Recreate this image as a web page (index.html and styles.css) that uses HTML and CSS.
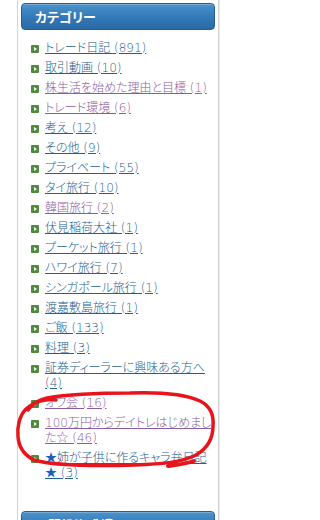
FILE: index.html
```html
<!DOCTYPE html>
<html lang="ja">
<head>
<meta charset="utf-8">
<link rel="stylesheet" href="styles.css">
</head>
<body>
<div class="column">
  <section class="panel">
    <h2 class="panel-title">カテゴリー</h2>
    <ul class="cats">
      <li><span class="bullet"></span><a href="#">トレード日記 (891)</a></li>
      <li><span class="bullet"></span><a href="#">取引動画 (10)</a></li>
      <li><span class="bullet"></span><a href="#" class="visited">株生活を始めた理由と目標 (1)</a></li>
      <li><span class="bullet"></span><a href="#" class="visited">トレード環境 (6)</a></li>
      <li><span class="bullet"></span><a href="#">考え (12)</a></li>
      <li><span class="bullet"></span><a href="#">その他 (9)</a></li>
      <li><span class="bullet"></span><a href="#">プライベート (55)</a></li>
      <li><span class="bullet"></span><a href="#">タイ旅行 (10)</a></li>
      <li><span class="bullet"></span><a href="#" class="visited">韓国旅行 (2)</a></li>
      <li><span class="bullet"></span><a href="#">伏見稲荷大社 (1)</a></li>
      <li><span class="bullet"></span><a href="#">プーケット旅行 (1)</a></li>
      <li><span class="bullet"></span><a href="#">ハワイ旅行 (7)</a></li>
      <li><span class="bullet"></span><a href="#">シンガポール旅行 (1)</a></li>
      <li><span class="bullet"></span><a href="#">渡嘉敷島旅行 (1)</a></li>
      <li><span class="bullet"></span><a href="#">ご飯 (133)</a></li>
      <li><span class="bullet"></span><a href="#">料理 (3)</a></li>
      <li><span class="bullet"></span><a href="#">証券ディーラーに興味ある方へ (4)</a></li>
      <li><span class="bullet"></span><a href="#" class="visited">オフ会 (16)</a></li>
      <li><span class="bullet"></span><a href="#" class="visited">100万円からデイトレはじめました☆ (46)</a></li>
      <li><span class="bullet"></span><a href="#"><span class="star">★</span>姉が子供に作るキャラ弁日記<span class="star">★</span> (3)</a></li>
    </ul>
  </section>
  <section class="panel">
    <h2 class="panel-title">日間投資成績</h2>
  </section>
</div>
<svg class="scribble" width="240" height="520" viewBox="0 0 240 520">
  <path d="M56 400 C 46 398, 34 402, 26 409 C 19 416, 17 428, 18 437 C 19 448, 24 455, 34 460 C 55 466, 100 466, 135 465 C 160 464, 180 463, 196 455 C 208 448, 213 438, 213 426 C 214 415, 210 406, 200 401 C 185 394, 160 392, 130 393 C 100 393, 70 394, 47 398 C 38 400, 32 404, 28 410"
        fill="none" stroke="#e8141b" stroke-width="3.5" stroke-linecap="round" stroke-linejoin="round"/>
  <path d="M168 466 C 176 465, 186 464, 194 461" fill="none" stroke="#e8141b" stroke-width="4" stroke-linecap="round"/>
</svg>
</body>
</html>
```

FILE: styles.css
```css
html, body {
  margin: 0;
  padding: 0;
  background: #ffffff;
}

body {
  position: relative;
  width: 240px;
  height: 520px;
  overflow: hidden;
  font-family: "DejaVu Sans", "Noto Sans CJK JP", sans-serif;
  font-feature-settings: "palt";
}

.column {
  margin-left: 17px;
  width: 202px;
}

.panel {
  box-sizing: border-box;
  border-left: 1px solid #d2d2d2;
  border-right: 1px solid #cfcfcf;
  box-shadow: 1px 0 0 #ececec;
  padding: 3px 3px 0 3px;
}

.panel:first-child {
  height: 508px;
}

.panel-title {
  margin: 0;
  box-sizing: border-box;
  height: 27px;
  border: 1px solid #22618f;
  border-radius: 4px;
  background: linear-gradient(#4b93cb, #3378b7 55%, #2a6aa6);
  box-shadow: inset 0 1px 0 rgba(255, 255, 255, 0.25);
  color: #ffffff;
  font-family: "Noto Sans CJK JP", sans-serif;
  font-size: 13px;
  font-weight: bold;
  line-height: 25px;
  padding-left: 13px;
  letter-spacing: 0;
}

.cats {
  list-style: none;
  margin: 11px 0 0 0;
  padding: 0 2px 0 10px;
}

.cats li {
  display: flex;
  align-items: flex-start;
  font-size: 12px;
  font-weight: 300;
  line-height: 15px;
  margin-bottom: 5px;
}

.bullet {
  flex: none;
  position: relative;
  width: 8px;
  height: 8px;
  margin-top: 4px;
  margin-right: 6px;
  border-radius: 1px;
  background: #4f8a3f;
}

.bullet::after {
  content: "";
  position: absolute;
  left: 3px;
  top: 2px;
  border-left: 3px solid #ffffff;
  border-top: 2px solid transparent;
  border-bottom: 2px solid transparent;
}

.cats a {
  color: #24608f;
  text-decoration: underline;
}

.cats a.visited {
  color: #8b5c9f;
}

.star {
  color: #1560c8;
}

.scribble {
  position: absolute;
  left: 0;
  top: 0;
  pointer-events: none;
}
```
